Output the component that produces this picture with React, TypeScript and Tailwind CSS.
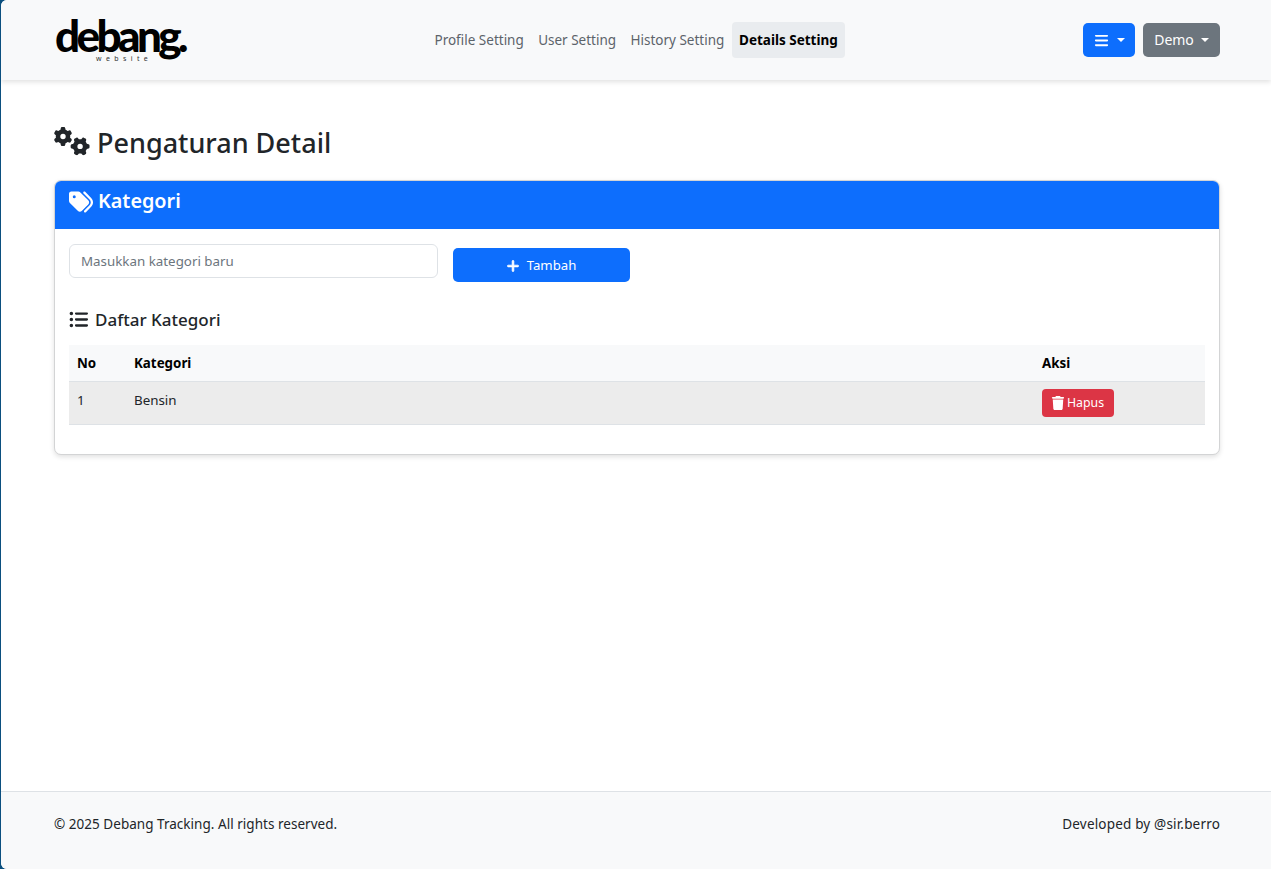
import { FaBars, FaGears, FaTags, FaPlus, FaListUl, FaTrash } from "react-icons/fa6";

const font = { fontFamily: '"Noto Sans", "Open Sans", sans-serif' };

function NavLink({ label, active }: { label: string; active?: boolean }) {
  return (
    <a
      className={
        active
          ? "h-[36px] flex items-center px-[7.5px] rounded-[4px] bg-[#e9ecef] text-black font-bold text-[13.5px]"
          : "h-[36px] flex items-center px-[7.2px] text-[#5c636a] text-[13.5px]"
      }
    >
      {label}
    </a>
  );
}

export default function App() {
  return (
    <div className="h-[869px] w-full bg-[#0b4f7f] overflow-hidden" style={font}>
      <div className="ml-px h-full bg-white rounded-l-[6px] overflow-hidden flex flex-col">
        <nav className="h-[80px] shrink-0 bg-[#f8f9fa] shadow-[0_2px_5px_rgba(0,0,0,0.12)] flex items-center justify-between pl-[54px] pr-[51px] relative">
          <div className="w-[140px] relative h-[50px]">
            <span className="absolute left-0 top-[-5px] text-[44px] leading-[50px] font-black text-black tracking-[-3.6px]" style={{ fontFamily: '"Lato", sans-serif' }}>
              debang.
            </span>
            <span className="absolute left-[41px] top-[39px] text-[7px] leading-[9px] tracking-[4.4px] text-[#333]">website</span>
          </div>
          <div className="flex items-center absolute left-[426.3px] top-[22px]">
            <NavLink label="Profile Setting" />
            <NavLink label="User Setting" />
            <NavLink label="History Setting" />
            <NavLink label="Details Setting" active />
          </div>
          <div className="flex items-center gap-2">
            <button className="h-[34px] w-[52px] rounded-[5px] bg-[#0d6efd] text-white flex items-center justify-center gap-[8px]">
              <FaBars className="text-[15px]" />
              <span className="w-0 h-0 border-x-[4px] border-x-transparent border-t-[4px] border-t-white" />
            </button>
            <button className="h-[34px] w-[77px] rounded-[5px] bg-[#6c757d] text-white text-[14px] flex items-center justify-center gap-[7px] pb-[2px]">
              Demo
              <span className="w-0 h-0 border-x-[4px] border-x-transparent border-t-[4px] border-t-white mt-[2px]" />
            </button>
          </div>
        </nav>

        <main className="flex-1 pl-[53px] pr-[51px] pt-[44px]">
          <h1 className="flex items-center h-[36px] text-[27px] font-medium text-[#212529] gap-[7px]">
            <FaGears className="text-[36px] -mt-[2px]" />
            <span className="pt-[2px]">Pengaturan Detail</span>
          </h1>
          <section className="mt-[20px] h-[275px] rounded-[7px] bg-white border border-[#d3d4d5] shadow-[0_2px_5px_rgba(0,0,0,0.12)] overflow-hidden">
            <header className="h-[48px] bg-[#0d6efd] text-white flex items-center px-[14px] gap-[6px] text-[19.8px] font-semibold">
              <FaTags className="text-[24px] -mt-[6px]" />
              <span className="-mt-[9px] -ml-[1px]">Kategori</span>
            </header>
            <div className="px-[14px]">
              <div className="flex items-start pt-[15px]">
                <div className="w-[369px] h-[34px] rounded-[6px] border border-[#dee2e6] bg-white flex items-center px-[11px] pt-[1px] text-[13.35px] text-[#6c757d]">
                  Masukkan kategori baru
                </div>
                <button className="ml-[15px] mt-[4px] w-[177px] h-[34px] rounded-[5px] bg-[#0d6efd] text-white text-[13.2px] flex items-center justify-center gap-[7px] pt-[1px] pr-[1px]">
                  <FaPlus className="text-[14px] stroke-white stroke-[25px]" />
                  Tambah
                </button>
              </div>
              <h2 className="mt-[24px] h-[27px] flex items-center gap-[7px] text-[17px] font-medium text-[#212529]">
                <FaListUl className="text-[19px]" />
                Daftar Kategori
              </h2>
              <table className="mt-[12px] w-full text-[13.35px] border-collapse table-fixed">
                <thead>
                  <tr className="h-[36px] bg-[#f8f9fa] border-b border-[#dee2e6] text-black font-bold text-left">
                    <th className="w-[57px] pl-2 font-bold">No</th>
                    <th className="w-[908px] pl-2 font-bold">Kategori</th>
                    <th className="pl-2 font-bold">Aksi</th>
                  </tr>
                </thead>
                <tbody>
                  <tr className="h-[43px] bg-[#ececec] border-b border-[#dee2e6] text-[#212529]">
                    <td className="pl-2 align-top pt-[8px]">1</td>
                    <td className="pl-2 align-top pt-[8px]">Bensin</td>
                    <td className="pl-2 align-top pt-[7px]">
                      <button className="w-[72px] h-[28px] rounded-[4px] bg-[#dc3545] text-white text-[12.3px] flex items-center justify-center gap-[2px] pr-[1px]">
                        <FaTrash className="text-[14px]" />
                        <span className="pt-[1px]">Hapus</span>
                      </button>
                    </td>
                  </tr>
                </tbody>
              </table>
            </div>
          </section>
        </main>

        <footer className="h-[78px] shrink-0 bg-[#f8f9fa] border-t border-[#dee2e6] pl-[53px] pr-[51px] pt-[22px] flex justify-between text-[13.5px] text-[#212529]">
          <span className="tracking-[0.03px]">© 2025 Debang Tracking. All rights reserved.</span>
          <span className="tracking-[0.18px]">Developed by @sir.berro</span>
        </footer>
      </div>
    </div>
  );
}
